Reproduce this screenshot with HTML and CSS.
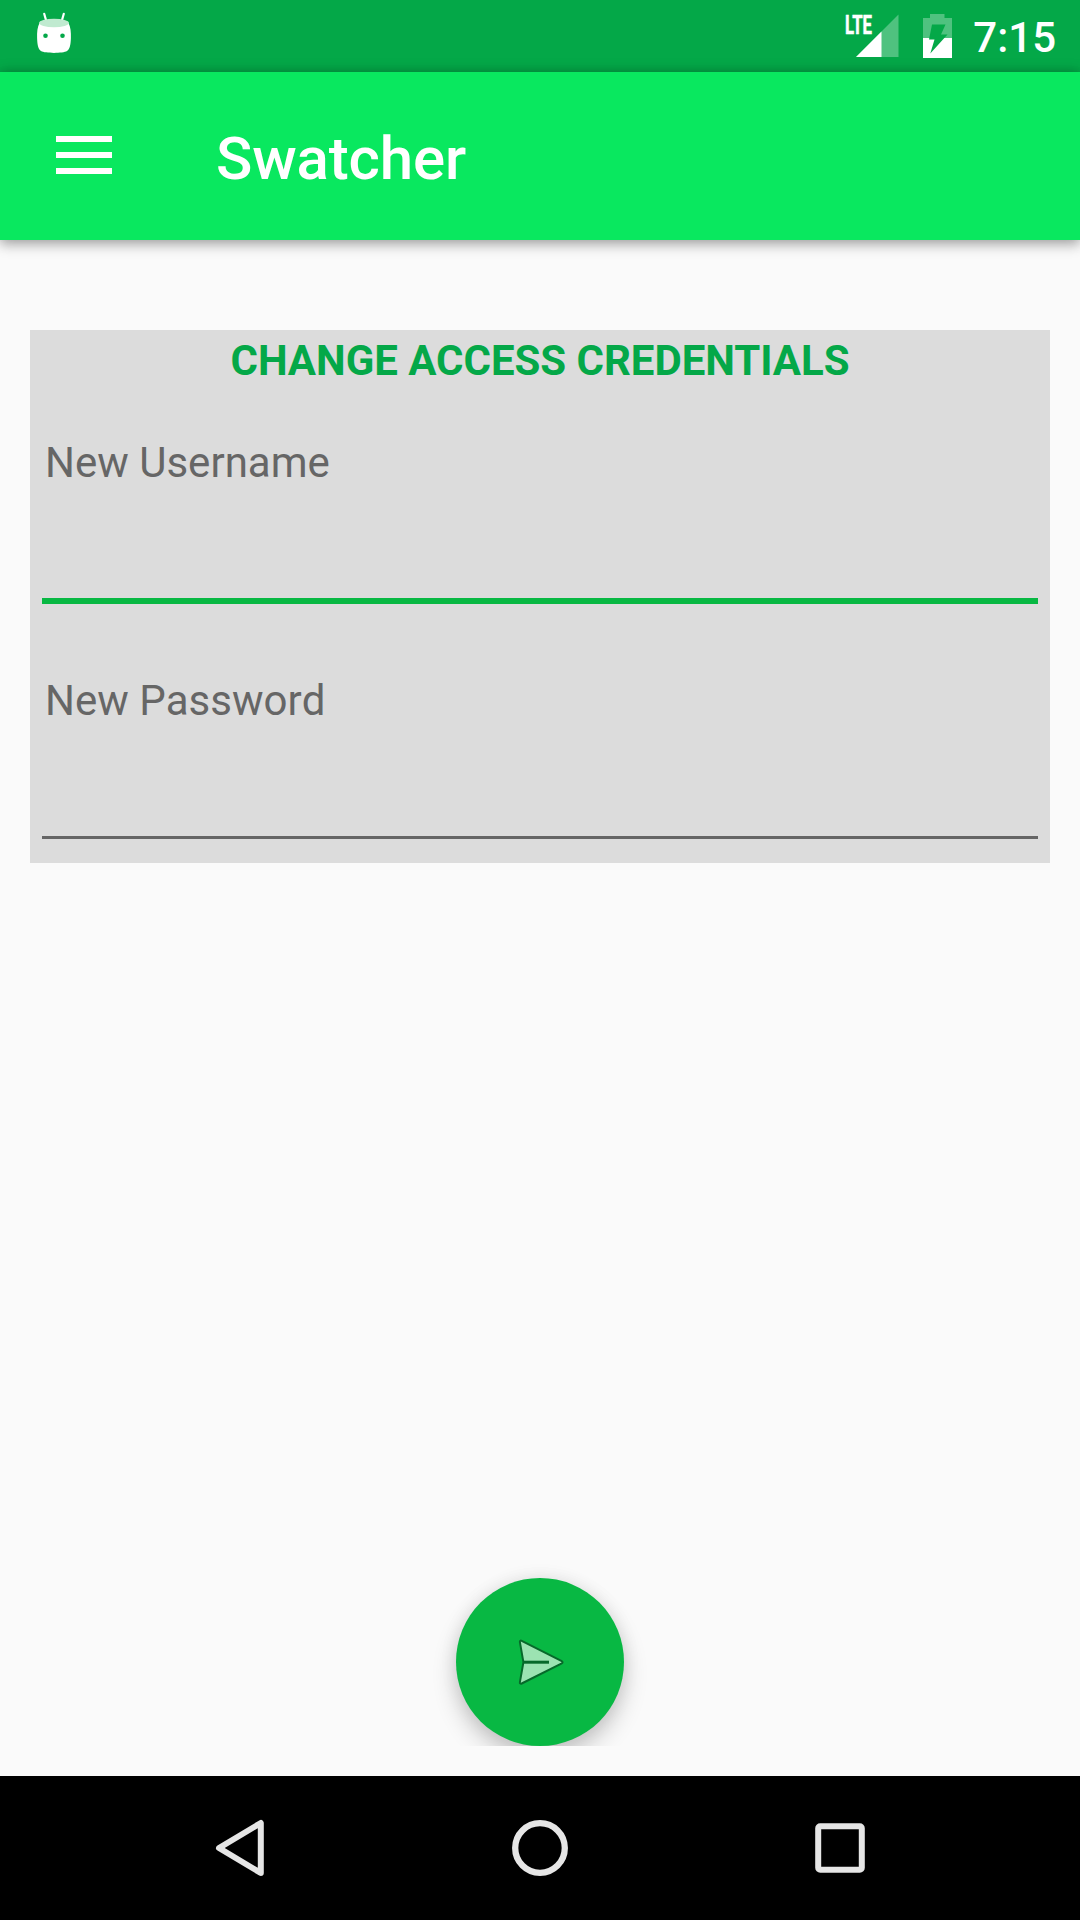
FILE: index.html
```html
<!DOCTYPE html>
<html lang="en">
<head>
<meta charset="utf-8">
<title>Swatcher</title>
<link rel="stylesheet" href="styles.css">
</head>
<body>
<div class="screen">
  <div class="status-bar">
    <svg class="status-debug" width="36" height="44" viewBox="0 0 36 44">
      <path d="M8.200 1.800 L10.400 9.500 M27.800 1.800 L25.600 9.500" stroke="#fff" stroke-width="2.200" stroke-linecap="round" fill="none"/>
      <path d="M3.500 11 C1.400 15 .900 20 1.100 26 C1.300 33 2.300 37.500 5 39 C9 41.500 27 41.500 31 39 C33.700 37.500 34.700 33 34.900 26 C35.100 20 34.600 15 32.500 11 Z" fill="#fff"/>
      <ellipse cx="18" cy="11" rx="15" ry="4.200" fill="#c0ead0"/>
      <circle cx="9.500" cy="23.800" r="2.300" fill="#04a848"/>
      <circle cx="26.500" cy="23.800" r="2.300" fill="#04a848"/>
    </svg>
    <div class="status-right">
      <svg width="56" height="46" viewBox="0 0 56 46">
        <path d="M13 44 L55.500 1.500 V44 Z" fill="#fff" fill-opacity=".3"/>
        <path d="M13 44 L38.500 18.500 V44 Z" fill="#fff"/>
        <text class="network" x="2" y="20.500" textLength="27" lengthAdjust="spacingAndGlyphs">LTE</text>
      </svg>
      <svg width="29" height="44" viewBox="0 0 29 44">
        <path d="M0 4 H7 V0 H21.500 V4 H29 V24 H0 Z" fill="#fff" fill-opacity=".3"/>
        <path d="M0 24 H29 V44 H0 Z" fill="#fff"/>
        <path d="M9 10.500 H22.500 L18 20.500 H24.500 L7.300 39.500 L11.500 25.500 H6 Z" fill="#04a848"/>
      </svg>
      <span class="clock">7:15</span>
    </div>
  </div>
  <header class="app-bar">
    <svg class="menu-icon" width="56" height="38" viewBox="0 0 56 38">
      <path d="M0 0H56V6H0Z M0 16H56V22H0Z M0 32H56V38H0Z" fill="#fff"/>
    </svg>
    <h1 class="app-title">Swatcher</h1>
  </header>
  <main class="content">
    <form class="card">
      <h2 class="card-title">CHANGE ACCESS CREDENTIALS</h2>
      <div class="field field-active">
        <label class="field-label" for="username">New Username</label>
        <input class="field-input" id="username" type="text">
      </div>
      <div class="field">
        <label class="field-label" for="password">New Password</label>
        <input class="field-input" id="password" type="password">
      </div>
    </form>
    <div class="fab-row">
      <button class="fab" type="button" aria-label="Send">
        <svg width="50" height="50" viewBox="0 0 50 50">
          <path d="M4.900 3.200 C4.600 1.800 5.600 1.300 6.700 1.800 L46.300 21.800 C48 22.700 48 23.800 46.300 24.700 L6.700 44.500 C5.600 45 4.600 44.500 4.900 43.100 L8.400 23.200 Z" fill="#9ce3b2" stroke="#07692a" stroke-width="2"/>
          <path d="M8.400 23.200 H34" stroke="#07692a" stroke-width="3"/>
        </svg>
      </button>
    </div>
  </main>
  <nav class="nav-bar">
    <svg width="60" height="60" viewBox="0 0 60 60">
      <path d="M50.800 5 V55 L9 30 Z" fill="none" stroke="#e6e6e6" stroke-width="6" stroke-linejoin="round"/>
    </svg>
    <svg width="60" height="60" viewBox="0 0 60 60">
      <circle cx="30" cy="30" r="24.800" fill="none" stroke="#e6e6e6" stroke-width="6.300"/>
    </svg>
    <svg width="60" height="60" viewBox="0 0 60 60">
      <rect x="8.200" y="8.200" width="43.600" height="43.600" rx="2" fill="none" stroke="#e6e6e6" stroke-width="6"/>
    </svg>
  </nav>
</div>
</body>
</html>
```
FILE: styles.css
```css
* {
  box-sizing: border-box;
}

body {
  margin: 0;
  font-family: Roboto, sans-serif;
}

svg {
  display: block;
  flex: none;
}

.screen {
  display: flex;
  flex-direction: column;
  width: 1080px;
  height: 1920px;
  overflow: hidden;
  background: #fafafa;
}

.status-bar {
  display: flex;
  align-items: flex-start;
  justify-content: space-between;
  height: 72px;
  padding: 12px 24px 0 36px;
  background: #04a848;
}

.status-right {
  display: flex;
  align-items: flex-start;
  padding-top: 1px;
}

.status-right svg + svg {
  margin: 1px 21px 0 24px;
}

.network {
  font-size: 26px;
  font-weight: 700;
  fill: #fff;
  stroke: #fff;
  stroke-width: 0.6px;
}

.clock {
  color: #fff;
  font-size: 42px;
  font-weight: 500;
  line-height: 49px;
}

.app-bar {
  display: flex;
  align-items: center;
  z-index: 1;
  height: 168px;
  padding-left: 56px;
  background: #09e85f;
  box-shadow: 0 0 12px rgba(0, 0, 0, 0.26), 0 6px 12px rgba(0, 0, 0, 0.2);
}

.menu-icon {
  margin-bottom: 2px;
}

.app-title {
  margin: 5px 0 0 104px;
  color: #fff;
  font-size: 60px;
  font-weight: 500;
  letter-spacing: -0.15px;
  line-height: 70px;
}

.content {
  display: flex;
  flex: 1;
  flex-direction: column;
  justify-content: space-between;
  padding: 90px 30px 30px;
}

.card {
  height: 533px;
  padding: 6px 12px 0;
  background: #dcdcdc;
}

.card-title {
  margin: 0;
  color: #04a848;
  font-size: 42px;
  font-weight: 700;
  letter-spacing: -0.04px;
  line-height: 49px;
  text-align: center;
}

.field {
  display: flex;
  flex-direction: column;
  height: 235px;
  padding-top: 72px;
}

.field-active {
  height: 219px;
  padding-top: 53px;
}

.field-label {
  padding-left: 3px;
  color: #666;
  font-size: 42px;
  font-kerning: none;
  line-height: 49px;
}

.field-input {
  flex: 1;
  width: 100%;
  min-height: 0;
  padding: 0 3px;
  border: 0;
  border-bottom: 3px solid #666;
  outline: none;
  background: transparent;
  font: inherit;
}

.field-active .field-input {
  border-bottom: 6px solid #08b843;
}

.fab-row {
  display: flex;
  justify-content: center;
  padding-top: 40px;
  overflow: hidden;
}

.fab {
  display: flex;
  align-items: center;
  justify-content: center;
  width: 168px;
  height: 168px;
  padding: 4px 0 0;
  border: 0;
  border-radius: 50%;
  background: #08b843;
  box-shadow: 0 0 18px rgba(0, 0, 0, 0.08), 0 12px 24px rgba(0, 0, 0, 0.2);
}

.nav-bar {
  display: flex;
  align-items: center;
  justify-content: center;
  gap: 240px;
  height: 144px;
  background: #000;
}
```
